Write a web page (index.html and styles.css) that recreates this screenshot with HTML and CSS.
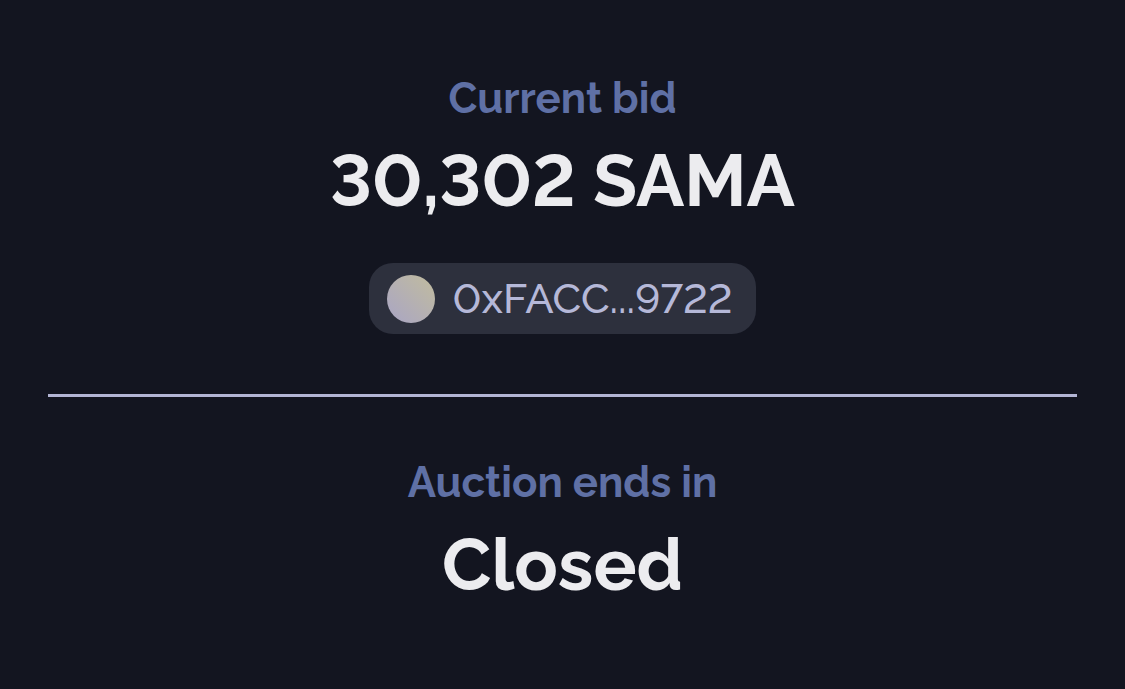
FILE: index.html
```html
<!DOCTYPE html>
<html lang="en">
<head>
    <meta charset="UTF-8">
    <meta name="viewport" content="width=device-width, initial-scale=1.0">
    <title>Auction</title>
    <link rel="stylesheet" href="styles.css">
</head>
<body>
    <main class="auction">
        <section class="bid">
            <h2 class="label">Current bid</h2>
            <p class="value">30,302 SAMA</p>
            <div class="bidder">
                <span class="avatar"></span>
                <span class="address">0xFACC...9722</span>
            </div>
        </section>
        <section class="ends">
            <h2 class="label">Auction ends in</h2>
            <p class="value">Closed</p>
        </section>
    </main>
</body>
</html>
```

FILE: styles.css
```css
body {
    margin: 0;
    background-color: #131520;
    font-family: Raleway, Lato, sans-serif;
    font-variant-numeric: lining-nums;
}

.auction {
    padding: 73px 48px;
    text-align: center;
}

.bid {
    display: flex;
    flex-direction: column;
    align-items: center;
    padding-bottom: 60px;
    border-bottom: 3px solid #b3b5d4;
}

.ends {
    padding-top: 60px;
}

.label {
    margin: 0;
    color: #5f70a5;
    font-size: 42px;
    font-weight: 700;
    line-height: 52px;
}

.value {
    margin: 10px 0 0;
    color: #ececef;
    font-size: 72px;
    font-weight: 700;
    line-height: 92px;
}

.bidder {
    display: flex;
    align-items: center;
    gap: 18px;
    height: 71px;
    margin-top: 36px;
    padding: 0 24px 0 18px;
    border-radius: 24px;
    background-color: #2d303d;
}

.avatar {
    width: 48px;
    height: 48px;
    border-radius: 50%;
    background: linear-gradient(45deg, #a9a5c5, #c1bc9e);
}

.address {
    color: #b5b8d8;
    font-size: 42px;
    font-weight: 500;
    line-height: 52px;
}
```
